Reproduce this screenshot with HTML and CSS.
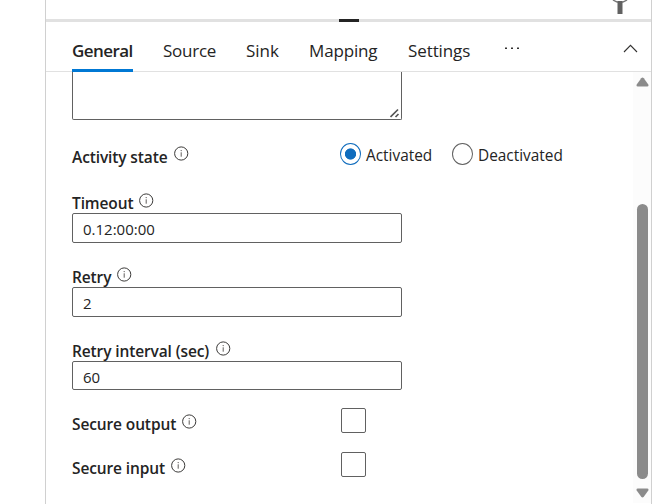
FILE: index.html
```
<!DOCTYPE html>
<html lang="en">
<head>
<meta charset="utf-8">
<title>Activity settings</title>
<link rel="stylesheet" href="styles.css">
</head>
<body>
<svg class="defs" width="0" height="0" aria-hidden="true">
  <symbol id="info" viewBox="0 0 15 15">
    <circle cx="7.2" cy="7.5" r="6.6" fill="none" stroke="#3b3a39"/>
    <path d="M7.2 6.3v4.4" stroke="#605e5c" fill="none"/>
    <circle cx="7.2" cy="4.6" r=".7" fill="#605e5c"/>
  </symbol>
</svg>
<div class="panel">
  <div class="canvas-edge">
    <svg class="pin" width="16" height="14" viewBox="0 0 16 14"><path d="M1 0Q8 5 15 0" fill="none" stroke="#777" stroke-width="1.5"/><path d="M5.5 1h5v13h-5z" fill="#616161"/></svg>
  </div>
  <div class="splitter"><span class="grip"></span></div>
  <nav class="tabs">
    <span class="tab active t-general">General</span>
    <span class="tab t-source">Source</span>
    <span class="tab t-sink">Sink</span>
    <span class="tab t-mapping">Mapping</span>
    <span class="tab t-settings">Settings</span>
    <svg class="more" width="16" height="4" viewBox="0 0 16 4"><path d="M1 .5h2v1.500H1zM7 .5h2v1.500H7zM13 .5h2v1.500h-2z" fill="#323130"/></svg>
    <svg class="chevron" width="15" height="9" viewBox="0 0 15 9"><path d="M1 8L7.500 1.400 14 8" fill="none" stroke="#323130" stroke-width="1.1"/></svg>
  </nav>
  <div class="body">
    <form class="form">
      <div class="textarea"><svg width="10" height="10" viewBox="0 0 10 10"><path d="M.5 9L8 1.500M5.500 9l3-3" fill="none" stroke="#555" stroke-width="1.700"/></svg></div>
      <div class="row state">
        <div class="label"><span class="l-state">Activity state</span><svg class="info"><use href="#info"/></svg></div>
        <div class="radios">
          <span class="radio on"></span><span class="opt o-act">Activated</span>
          <span class="radio"></span><span class="opt o-deact">Deactivated</span>
        </div>
      </div>
      <div class="field">
        <div class="label"><span class="l-timeout">Timeout</span><svg class="info"><use href="#info"/></svg></div>
        <div class="input">0.12:00:00</div>
      </div>
      <div class="field">
        <div class="label"><span class="l-retry">Retry</span><svg class="info"><use href="#info"/></svg></div>
        <div class="input">2</div>
      </div>
      <div class="field">
        <div class="label"><span class="l-interval">Retry interval (sec)</span><svg class="info"><use href="#info"/></svg></div>
        <div class="input last">60</div>
      </div>
      <div class="row check">
        <div class="label"><span class="l-output">Secure output</span><svg class="info"><use href="#info"/></svg></div>
        <span class="box"></span>
      </div>
      <div class="row check">
        <div class="label"><span class="l-input">Secure input</span><svg class="info"><use href="#info"/></svg></div>
        <span class="box"></span>
      </div>
    </form>
    <div class="scrollbar">
      <svg width="13" height="10" viewBox="0 0 13 10"><path d="M5.2 1.2Q6.5-.4 7.8 1.2L12.3 7.6Q13 9.6 11.2 9.6H1.8Q0 9.6.7 7.6z" fill="#8b8b8b"/></svg>
      <span class="thumb"></span>
      <svg width="13" height="10" viewBox="0 0 13 10"><path d="M5.2 8.8Q6.5 10.4 7.8 8.8L12.3 2.4Q13 .4 11.2.4H1.8Q0 .4.7 2.4z" fill="#8b8b8b"/></svg>
    </div>
  </div>
</div>
</body>
</html>
```
FILE: styles.css
```
* { box-sizing: border-box; }
body {
  margin: 0;
  background: #fff;
  color: #242424;
  font: 16px/22px "Open Sans", "Noto Sans", sans-serif;
  overflow: hidden;
}
.defs { position: absolute; }
.panel {
  width: 607px;
  height: 504px;
  margin-left: 45px;
  border: solid #d0d0d0;
  border-width: 0 1px;
  display: flex;
  flex-direction: column;
}
.canvas-edge { height: 19px; padding-right: 23px; text-align: right; line-height: 0; }
.splitter { height: 3px; background: #e1e1e1; display: flex; padding-left: 293px; }
.grip { width: 20px; background: #242424; }
.tabs {
  height: 50px;
  flex: none;
  padding: 0 13px 0 26px;
  border-bottom: 1px solid #e1e1e1;
  display: flex;
  gap: 30px;
}
.tab { height: 50px; font-size: 17px; line-height: 58px; white-space: nowrap; }
.active { font-weight: 600; border-bottom: 3px solid #0078d4; }
.t-general { width: 61px; letter-spacing: -.55px; }
.t-source { width: 53px; letter-spacing: -.25px; }
.t-sink { width: 33px; }
.t-mapping { width: 69px; letter-spacing: -.15px; }
.t-settings { width: 62px; letter-spacing: -.1px; }
.more { margin: 25px 0 0 4px; }
.chevron { margin: 22px 0 0 auto; }
.body { flex: 1; display: flex; justify-content: space-between; }
.form { width: 500px; padding-left: 26px; }
.textarea {
  width: 330px;
  height: 48px;
  border: 1px solid #616161;
  border-top: 0;
  border-radius: 0 0 2px 2px;
  display: flex;
  justify-content: flex-end;
  align-items: flex-end;
  padding: 1px;
}
.row { display: flex; }
.state { height: 69px; padding-top: 23px; }
.label { display: flex; height: 24px; line-height: 28px; font-size: 15.5px; letter-spacing: -.12px; font-weight: 600; white-space: nowrap; }
.row .label { width: 268px; flex: none; }
.info { width: 15px; height: 15px; margin: 3.5px 0 0 6px; flex: none; }
.state .info { margin-top: 3px; }
.l-state { width: 96px; }
.l-timeout { width: 61px; }
.l-retry { width: 39px; }
.l-interval { width: 138px; }
.l-output { width: 104px; }
.l-input { width: 93px; }
.radios { display: flex; }
.radio { width: 21px; height: 22px; border: 1px solid #616161; border-radius: 50%; }
.radio.on { border-color: #0f6cbd; background: radial-gradient(circle, #0f6cbd 5.2px, #fff 6px); }
.opt { font-size: 15.4px; line-height: 26px; margin-left: 5px; }
.o-act { width: 86px; }
.field { height: 74px; }
.input {
  width: 330px;
  height: 30px;
  border: 1px solid #616161;
  border-radius: 2px;
  padding-left: 10px;
  font-size: 15px;
  line-height: 30px;
}
.input.last { height: 29px; }
.check { height: 44px; }
.check .label { margin-top: 2px; }
.check:nth-of-type(6) { margin-top: -3px; }
.box { width: 25px; height: 25px; margin-left: 1px; border: 1px solid #616161; border-radius: 2px; }
.scrollbar {
  width: 18px;
  height: 431px;
  padding: 5px 2px 5px 3px;
  background: #fcfcfc;
  display: flex;
  flex-direction: column;
  align-items: center;
}
.thumb { width: 11px; height: 275px; margin: 117px 0 9px; border-radius: 6px; background: #8b8b8b; flex: none; }
```
